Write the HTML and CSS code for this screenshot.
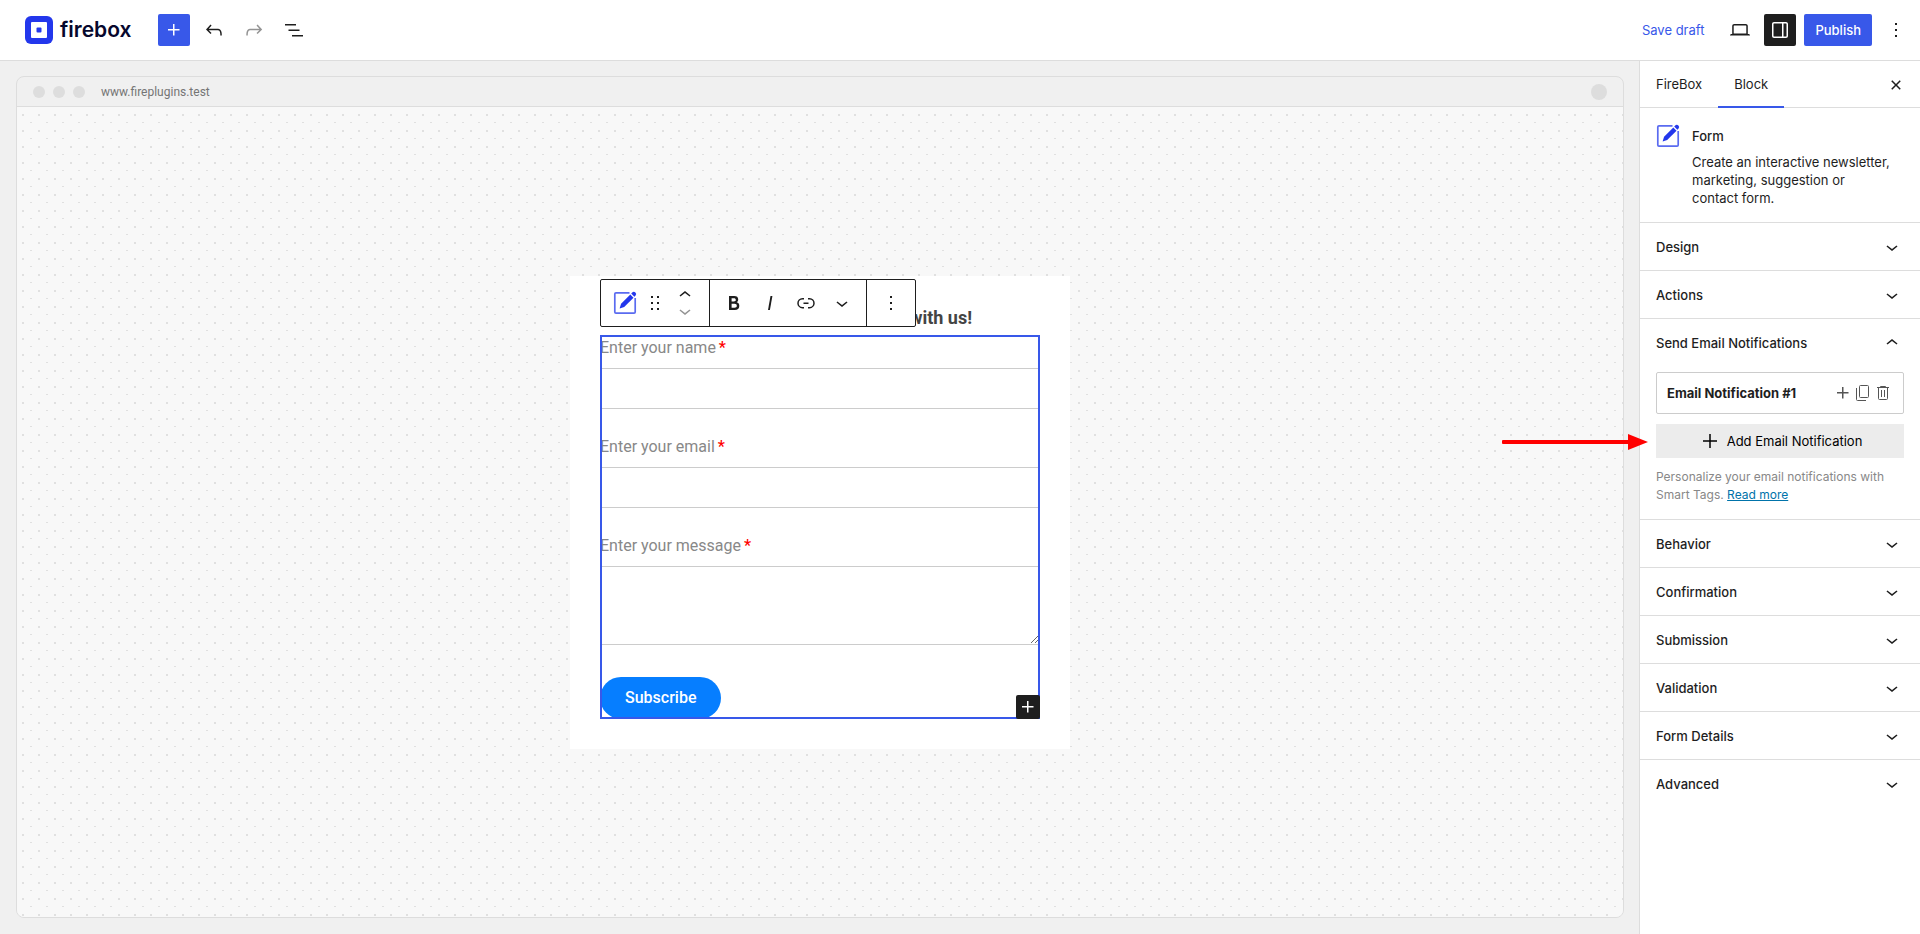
FILE: index.html
```
<!DOCTYPE html>
<html lang="en">

<head>
    <meta charset="UTF-8">
    <meta name="viewport" content="width=device-width, initial-scale=1.0">
    <title>firebox</title>
    <link rel="stylesheet" href="styles.css">
</head>

<body>
    <!-- shared icons -->
    <svg class="sprite" width="0" height="0">
        <symbol id="plus" viewBox="0 0 24 24"><path d="M11 12.5V17.5H12.5V12.5H17.5V11H12.5V6H11V11H6V12.5H11Z"/></symbol>
        <symbol id="down" viewBox="0 0 24 24"><path d="M17.5 11.6L12 16l-5.5-4.4.9-1.2L12 14l4.5-3.6 1 1.2z"/></symbol>
        <symbol id="up" viewBox="0 0 24 24"><path d="M6.5 12.4L12 8l5.5 4.4-.9 1.2L12 10l-4.5 3.6-1-1.2z"/></symbol>
        <symbol id="more" viewBox="0 0 24 24"><path d="M13 19h-2v-2h2v2zm0-6h-2v-2h2v2zm0-6h-2V5h2v2z"/></symbol>
        <symbol id="form" viewBox="0 0 24 24">
            <path d="M16.5 1.8H3A1.2 1.2 0 0 0 1.8 3V21A1.2 1.2 0 0 0 3 22.2H21A1.2 1.2 0 0 0 22.2 21V7" fill="none" stroke="#5a6bf0" stroke-width="1.7"/>
            <path d="M6.6 17.6l1.5-4.8L17.3 3.5l3.2 3.2-9.3 9.3z" fill="#2337ec"/>
            <path d="M18.2 2.6l1-1a2.2 2.2 0 0 1 3.2 3.2l-1 1z" fill="#2337ec"/>
        </symbol>
    </svg>

    <div class="editor">
        <header class="header">
            <a class="logo" href="#">
                <svg width="28" height="28" viewBox="0 0 28 28">
                    <rect width="28" height="28" rx="6" fill="#2337ec"/>
                    <rect x="6" y="6" width="16" height="16" rx="1" fill="#fff"/>
                    <rect x="11.5" y="11.5" width="5" height="5" rx="1" fill="#2337ec"/>
                </svg>
                <span>firebox</span>
            </a>
            <div class="tools">
                <button class="btn primary" aria-label="Add block"><svg class="icon"><use href="#plus"/></svg></button>
                <button class="btn" aria-label="Undo"><svg class="icon" viewBox="0 0 24 24"><path d="M18.3 11.7c-.6-.6-1.4-.9-2.3-.9H6.7l2.9-3.3-1.1-1-4.5 5L8.5 16l1-1-2.7-2.7H16c.5 0 .9.2 1.3.5 1 1 1 3.4 1 4.5v.3h1.5v-.2c0-1.5 0-4.3-1.5-5.7z"/></svg></button>
                <button class="btn muted" aria-label="Redo"><svg class="icon" viewBox="0 0 24 24"><path d="M15.6 6.5l-1.1 1 2.9 3.3H8c-.9 0-1.7.3-2.3.9-1.4 1.5-1.4 4.2-1.4 5.6v.2h1.5v-.3c0-1.1 0-3.5 1-4.5.3-.3.7-.5 1.3-.5h9.2L14.5 15l1.1 1.1 4.6-4.6-4.6-5z"/></svg></button>
                <button class="btn" aria-label="Document overview"><svg class="icon" viewBox="0 0 24 24"><path d="M3 6h11v1.5H3V6Zm3.5 5.5h11V13h-11v-1.5ZM21 17H10v1.5h11V17Z"/></svg></button>
            </div>
            <div class="actions">
                <button class="btn save">Save draft</button>
                <button class="btn" aria-label="Preview"><svg class="icon" viewBox="0 0 24 24"><path d="M20.5 16h-.7V8c0-1.1-.9-2-2-2H6.2c-1.1 0-2 .9-2 2v8h-.7c-.8 0-1.5.7-1.5 1.5h20c0-.8-.7-1.5-1.5-1.5zM5.7 8c0-.3.2-.5.5-.5h11.6c.3 0 .5.2.5.5v7.6H5.7V8z"/></svg></button>
                <button class="btn dark" aria-label="Settings"><svg class="icon" viewBox="0 0 24 24"><path d="M18 4H6c-1.1 0-2 .9-2 2v12c0 1.1.9 2 2 2h12c1.1 0 2-.9 2-2V6c0-1.1-.9-2-2-2zm-4 14.5H6c-.3 0-.5-.2-.5-.5V6c0-.3.2-.5.5-.5h8v13zm4.5-.5c0 .3-.2.5-.5.5h-2.5v-13H18c.3 0 .5.2.5.5v12z"/></svg></button>
                <button class="btn primary publish">Publish</button>
                <button class="btn options" aria-label="Options"><svg class="icon"><use href="#more"/></svg></button>
            </div>
        </header>

        <div class="body">
            <main class="content">
                <div class="browser">
                    <div class="browser-bar">
                        <i class="dot"></i>
                        <i class="dot"></i>
                        <i class="dot"></i>
                        <span class="url">www.fireplugins.test</span>
                        <i class="dot avatar"></i>
                    </div>
                    <div class="canvas">
                        <div class="popup">
                            <div class="toolbar">
                                <div class="group first">
                                    <button aria-label="Form"><svg class="icon"><use href="#form"/></svg></button>
                                    <button aria-label="Drag"><svg class="icon" viewBox="0 0 24 24"><path d="M8 7h2V5H8v2zm0 6h2v-2H8v2zm0 6h2v-2H8v2zm6-14v2h2V5h-2zm0 8h2v-2h-2v2zm0 6h2v-2h-2v2z"/></svg></button>
                                    <div class="movers">
                                        <button aria-label="Move up"><svg class="icon"><use href="#up"/></svg></button>
                                        <button class="muted" aria-label="Move down"><svg class="icon"><use href="#down"/></svg></button>
                                    </div>
                                </div>
                                <div class="group">
                                    <button aria-label="Bold"><svg class="icon" viewBox="0 0 24 24"><path d="M14.7 11.3c1-.6 1.5-1.6 1.5-3 0-2.3-1.3-3.4-4-3.4H7v14h5.8c1.4 0 2.5-.3 3.3-1 .8-.7 1.2-1.7 1.2-2.9.1-1.9-.8-3.1-2.6-3.7zm-5.1-4h2.3c.6 0 1.1.1 1.4.4.3.3.5.7.5 1.2s-.2 1-.5 1.2c-.3.3-.8.4-1.4.4H9.6V7.3zm4.6 9c-.4.3-1 .4-1.7.4H9.6v-3.9h2.9c.7 0 1.3.2 1.7.5.4.3.6.8.6 1.5s-.2 1.2-.6 1.5z"/></svg></button>
                                    <button aria-label="Italic"><svg class="icon" viewBox="0 0 24 24"><path d="M12.5 5L10 19h1.9l2.5-14z"/></svg></button>
                                    <button aria-label="Link"><svg class="icon" viewBox="0 0 24 24"><path d="M10 17.389H8.444A5.194 5.194 0 1 1 8.444 7H10v1.5H8.444a3.694 3.694 0 0 0 0 7.389H10v1.5ZM14 7h1.556a5.194 5.194 0 0 1 0 10.39H14v-1.5h1.556a3.694 3.694 0 0 0 0-7.39H14V7Zm-4.5 6h5v-1.5h-5V13Z"/></svg></button>
                                    <button aria-label="More"><svg class="icon"><use href="#down"/></svg></button>
                                </div>
                                <div class="group last">
                                    <button aria-label="Options"><svg class="icon"><use href="#more"/></svg></button>
                                </div>
                            </div>
                            <h2 class="title">with us!</h2>
                            <form class="form">
                                <label for="name">Enter your name <b>*</b></label>
                                <input id="name" type="text">
                                <label for="email">Enter your email <b>*</b></label>
                                <input id="email" type="email">
                                <label for="message">Enter your message <b>*</b></label>
                                <textarea id="message"></textarea>
                                <button class="subscribe" type="button">Subscribe</button>
                                <button class="appender" type="button" aria-label="Add block"><svg class="icon"><use href="#plus"/></svg></button>
                            </form>
                        </div>
                    </div>
                </div>
            </main>

            <aside class="sidebar">
                <div class="tabs">
                    <button>FireBox</button>
                    <button class="active">Block</button>
                    <button class="close" aria-label="Close"><svg class="icon" viewBox="0 0 24 24"><path d="M12 13.06l3.712 3.713 1.061-1.06L13.061 12l3.712-3.712-1.06-1.06L12 10.938 8.288 7.227l-1.061 1.06L10.939 12l-3.712 3.712 1.06 1.061L12 13.061z"/></svg></button>
                </div>
                <div class="card">
                    <svg class="icon"><use href="#form"/></svg>
                    <div>
                        <h2>Form</h2>
                        <p>Create an interactive newsletter, marketing, suggestion or contact form.</p>
                    </div>
                </div>
                <section class="panel"><button>Design<svg class="icon"><use href="#down"/></svg></button></section>
                <section class="panel"><button>Actions<svg class="icon"><use href="#down"/></svg></button></section>
                <section class="panel">
                    <button>Send Email Notifications<svg class="icon"><use href="#up"/></svg></button>
                    <div class="panel-body">
                        <div class="item">
                            <span>Email Notification #1</span>
                            <button aria-label="Expand"><svg class="icon"><use href="#plus"/></svg></button>
                            <button aria-label="Duplicate"><svg width="16" height="16" viewBox="0 0 16 16" fill="none" stroke="#555"><rect x="4.5" y=".5" width="9" height="12" rx="1"/><path d="M1.5 3v11.5a1 1 0 0 0 1 1H11"/></svg></button>
                            <button aria-label="Delete"><svg width="16" height="16" viewBox="0 0 16 16" fill="none" stroke="#555"><path d="M2 2.5h12M5.5 2.5v-1h5v1M3.5 2.5v11a1 1 0 0 0 1 1h7a1 1 0 0 0 1-1v-11M6.5 5v7M9.5 5v7"/></svg></button>
                        </div>
                        <div class="add">
                            <button><svg class="icon" viewBox="0 0 24 24"><path d="M11.25 5h1.5v6.25H19v1.5h-6.25V19h-1.5v-6.25H5v-1.5h6.25z"/></svg>Add Email Notification</button>
                            <svg class="arrow" width="146" height="16" viewBox="0 0 146 16" fill="#f00"><rect y="6" width="130" height="4" rx="1"/><path d="M126 0l20 8-20 8z"/></svg>
                        </div>
                        <p>Personalize your email notifications with Smart Tags. <a href="#">Read more</a></p>
                    </div>
                </section>
                <section class="panel"><button>Behavior<svg class="icon"><use href="#down"/></svg></button></section>
                <section class="panel"><button>Confirmation<svg class="icon"><use href="#down"/></svg></button></section>
                <section class="panel"><button>Submission<svg class="icon"><use href="#down"/></svg></button></section>
                <section class="panel"><button>Validation<svg class="icon"><use href="#down"/></svg></button></section>
                <section class="panel"><button>Form Details<svg class="icon"><use href="#down"/></svg></button></section>
                <section class="panel"><button>Advanced<svg class="icon"><use href="#down"/></svg></button></section>
            </aside>
        </div>
    </div>
</body>

</html>
```
FILE: styles.css
```
* {
    box-sizing: border-box;
}

body {
    margin: 0;
    font: 13px/18px Inter, "Liberation Sans", sans-serif;
    color: #1e1e1e;
}

h2,
p {
    margin: 0;
}

button {
    display: flex;
    align-items: center;
    justify-content: center;
    padding: 0;
    border: 0;
    background: none;
    font: inherit;
    color: inherit;
}

svg {
    display: block;
    flex: none;
}

.sprite {
    position: absolute;
}

.icon {
    width: 24px;
    height: 24px;
    fill: currentColor;
}

.muted {
    color: #949494;
}

.editor {
    display: flex;
    flex-direction: column;
    height: 100vh;
}

/* header */
.header {
    display: flex;
    align-items: center;
    flex: none;
    padding: 14px 8px 14px 25px;
    border-bottom: 1px solid #ddd;
    background: #fff;
}

.logo {
    display: flex;
    align-items: center;
    gap: 7px;
    width: 133px;
    font: 600 21px/28px Inter, sans-serif;
    color: #06072d;
    text-decoration: none;
}

.tools,
.actions {
    display: flex;
    gap: 8px;
}

.actions {
    margin-left: auto;
}

.btn {
    min-width: 32px;
    height: 32px;
    border-radius: 2px;
}

.save {
    padding: 0 12px;
    color: #3858e9;
}

.primary {
    background: #3858e9;
    color: #fff;
}

.dark {
    background: #1e1e1e;
    color: #fff;
}

.publish {
    padding: 0 11px;
    font-weight: 500;
}

/* browser frame */
.body {
    display: flex;
    flex: 1;
    min-height: 0;
}

.content {
    display: flex;
    flex: 1;
    padding: 15px 15px 16px 16px;
    background: #f0f0f0;
}

.browser {
    display: flex;
    flex-direction: column;
    flex: 1;
    border: 1px solid #ddd;
    border-radius: 8px;
    overflow: hidden;
}

.browser-bar {
    display: flex;
    align-items: center;
    gap: 8px;
    height: 30px;
    padding: 0 16px;
    border-bottom: 1px solid #ddd;
}

.dot {
    width: 12px;
    height: 12px;
    border-radius: 50%;
    background: #ddd;
}

.avatar {
    width: 16px;
    height: 16px;
    margin-left: auto;
}

.url {
    margin-left: 8px;
    font: 12px/16px Roboto, sans-serif;
    color: #757575;
}

.canvas {
    display: flex;
    align-items: center;
    justify-content: center;
    flex: 1;
    background-color: #f8f8f8;
    background-image: radial-gradient(circle at 6px 8px, #e0e0e0 1px, transparent 1px), radial-gradient(circle at 14px 16px, #e0e0e0 1px, transparent 1px);
    background-size: 16px 16px;
}

/* popup with the form block */
.popup {
    position: relative;
    width: 500px;
    padding: 30px;
    background: #fff;
    font-family: Roboto, sans-serif;
}

.title {
    padding: 0 68px 6px 0;
    font-size: 18px;
    line-height: 23px;
    color: #444;
    text-align: right;
}

.toolbar {
    position: absolute;
    top: 3px;
    left: 30px;
    display: flex;
    height: 48px;
    border: 1px solid #1e1e1e;
    border-radius: 2px;
    background: #fff;
}

.group {
    display: flex;
    padding: 0 6px;
    border-right: 1px solid #1e1e1e;
}

.group > button {
    width: 36px;
}

.first > button + button {
    width: 24px;
}

.last {
    border-right: 0;
}

.movers {
    display: flex;
    flex-direction: column;
    justify-content: center;
    width: 36px;
}

.movers button {
    height: 16px;
}

.form {
    position: relative;
    display: flex;
    flex-direction: column;
    outline: 2px solid #3858e9;
    outline-offset: -2px;
}

.form label {
    margin-bottom: 8px;
    font-size: 16px;
    line-height: 25px;
    color: #888;
}

.form b {
    margin-left: -1px;
    color: #f00;
    font-weight: 500;
}

.form input,
.form textarea {
    height: 41px;
    margin: 0 0 25px;
    padding: 8px;
    border: 1px solid #ccc;
    font: 16px/24px Roboto, sans-serif;
}

.form textarea {
    height: 79px;
    margin-bottom: 32px;
    resize: vertical;
}

.subscribe {
    align-self: flex-start;
    height: 42px;
    padding: 0 25px;
    border-radius: 21px;
    background: #067eff;
    color: #fff;
    font-size: 16px;
    font-weight: 500;
}

.appender {
    position: absolute;
    right: 0;
    bottom: 0;
    z-index: 1;
    width: 24px;
    height: 24px;
    border-radius: 2px;
    background: #1e1e1e;
    color: #fff;
}

/* sidebar */
.sidebar {
    width: 281px;
    border-left: 1px solid #ddd;
    background: #fff;
}

.tabs {
    display: flex;
    height: 47px;
    border-bottom: 1px solid #ddd;
}

.tabs button {
    height: 47px;
    padding: 0 16px 2px;
}

.tabs .active {
    border-bottom: 2px solid #3858e9;
    padding-bottom: 0;
}

.tabs .close {
    margin-left: auto;
    padding: 0 12px;
}

.card {
    display: flex;
    gap: 12px;
    padding: 16px 28px 15px 16px;
}

.card h2 {
    padding-top: 3px;
    margin-bottom: 8px;
    font-size: 13px;
    line-height: 18px;
    font-weight: 500;
}

.panel {
    border-top: 1px solid #ddd;
}

.panel > button {
    justify-content: space-between;
    width: 100%;
    height: 47px;
    padding: 0 16px;
    font-weight: 500;
}

.panel-body {
    padding: 6px 16px 15px;
}

.item {
    display: flex;
    align-items: center;
    height: 42px;
    padding: 0 12px 0 10px;
    border: 1px solid #ccc;
    border-radius: 2px;
}

.item span {
    flex: 1;
    font-weight: 700;
}

.item button {
    color: #555;
}

.item button:last-child {
    margin-left: 4px;
}

.add {
    position: relative;
    margin: 10px 0;
}

.add button {
    gap: 5px;
    width: 100%;
    height: 34px;
    background: #ececec;
    color: #000;
}

.arrow {
    position: absolute;
    top: 10px;
    right: 100%;
    margin-right: 8px;
}

.panel-body p {
    font-size: 12px;
    color: #888;
}

.panel-body a {
    display: inline-block;
    color: #0073aa;
}
```
